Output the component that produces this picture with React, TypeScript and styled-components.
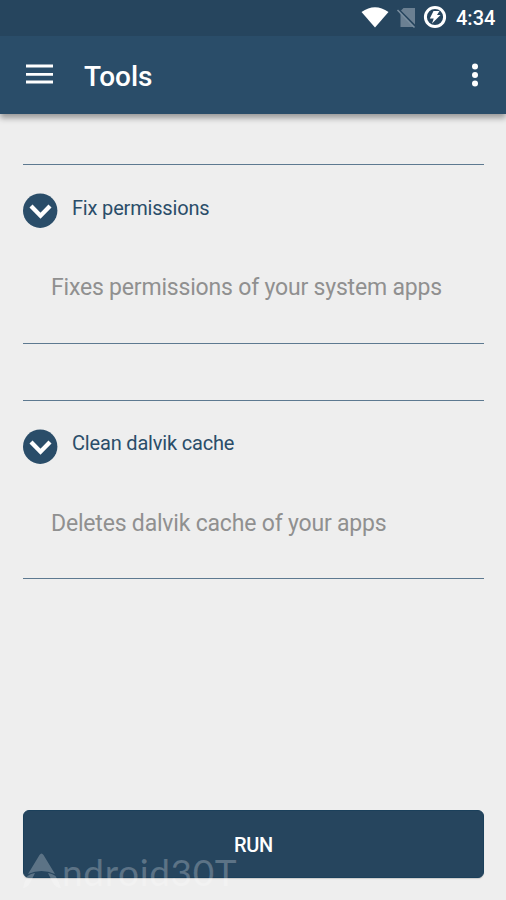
import React from 'react';
import styled, { createGlobalStyle } from 'styled-components';

const GlobalStyle = createGlobalStyle`
  * { box-sizing: border-box; }
  body { margin: 0; background: #eeeeee; font-family: Roboto, sans-serif; }
`;

const Screen = styled.div`
  width: 506px;
  height: 900px;
  display: flex;
  flex-direction: column;
  background: #eeeeee;
  overflow: hidden;
`;

const StatusBar = styled.div`
  height: 36px;
  flex: none;
  display: flex;
  align-items: center;
  justify-content: flex-end;
  padding-right: 11px;
  background: #26455e;
  color: #fff;
`;

const StatusIcons = styled.svg`
  width: 88px;
  height: 36px;
  margin-right: 7px;
`;

const Clock = styled.span`
  font-size: 20px;
  font-weight: 500;
  line-height: 36px;
  width: 39px;
  white-space: nowrap;
`;

const AppBar = styled.header`
  position: relative;
  height: 78px;
  flex: none;
  display: flex;
  align-items: center;
  padding: 0 27px 0 26px;
  background: #2a4d69;
  box-shadow: 0 4px 6px rgba(0, 0, 0, 0.36);
  clip-path: inset(0 0 -16px 0);
`;

const MenuIcon = styled.svg`
  width: 27px;
  height: 20px;
  margin-bottom: 2px;
`;

const Title = styled.h1`
  margin: 3px 0 0 31px;
  flex: 1;
  font-size: 28px;
  font-weight: 500;
  line-height: 36px;
  color: #fff;
`;

const MoreIcon = styled.svg`
  width: 8px;
  height: 24px;
`;

const Content = styled.main`
  flex: 1;
  display: flex;
  flex-direction: column;
  padding: 50px 22px 22px 23px;
`;

const Tool = styled.section<{ $height: number }>`
  height: ${(p) => p.$height}px;
  margin-bottom: 56px;
  padding-top: 28px;
  border-top: 1px solid #5d7990;
  border-bottom: 1px solid #5d7990;
`;

const ToolHeader = styled.div`
  display: flex;
  gap: 14px;
`;

const Chevron = styled.svg`
  width: 35px;
  height: 35px;
`;

const ToolName = styled.h2<{ $top: number }>`
  margin: ${(p) => p.$top}px 0 0;
  font-size: 20px;
  font-weight: 400;
  line-height: 24px;
  letter-spacing: -0.18px;
  color: #2a4d69;
`;

const Description = styled.p`
  margin: 46px 0 0 28px;
  font-size: 23px;
  line-height: 28px;
  letter-spacing: -0.19px;
  color: #909090;
  white-space: nowrap;
`;

const Footer = styled.div`
  position: relative;
  margin-top: auto;
`;

const RunButton = styled.button`
  display: block;
  width: 461px;
  height: 68px;
  padding: 2px 0 0;
  border: 1px solid #1b405b;
  border-radius: 6px;
  background: #26455e;
  color: #fff;
  font: 500 20px Roboto, sans-serif;
  letter-spacing: -0.3px;
  box-shadow: 0 1px 1px rgba(0, 0, 0, 0.15);
`;

const Watermark = styled.div`
  position: absolute;
  left: 0;
  top: 41px;
  display: flex;
  color: rgba(255, 255, 255, 0.25);
  pointer-events: none;
`;

const WatermarkLogo = styled.svg`
  width: 38px;
  height: 38px;
`;

const WatermarkText = styled.span`
  margin-left: 1px;
  font: 400 37px/42px Lato, sans-serif;
  letter-spacing: 0.65px;
`;

const tools = [
  { name: 'Fix permissions', text: 'Fixes permissions of your system apps', height: 180, nameTop: 3 },
  { name: 'Clean dalvik cache', text: 'Deletes dalvik cache of your apps', height: 179, nameTop: 2 },
];

export default function App() {
  return (
    <Screen>
      <GlobalStyle />
      <StatusBar>
        <StatusIcons viewBox="0 0 88 36">
          <path d="M.5 12Q14 2.500 27.500 12L14 27.500Z" fill="#fff" />
          <path d="M42.500 8H54v16.500L40 10.500ZM39.500 13 53 27H39.500Z" fill="#6b8092" />
          <path d="M36.500 10 53.500 27.500" stroke="#7b8fa0" strokeWidth="1.500" />
          <circle cx="74" cy="17" r="9.600" fill="none" stroke="#fff" strokeWidth="3" />
          <path d="M72.500 11h6l-2.500 4h3.500l-8.500 8.500 1.700-5h-3.900Z" fill="#fff" />
        </StatusIcons>
        <Clock>4:34</Clock>
      </StatusBar>
      <AppBar>
        <MenuIcon viewBox="0 0 27 20">
          <path d="M0 2h27M0 10.300h27M0 18h27" stroke="#fff" strokeWidth="2.800" />
        </MenuIcon>
        <Title>Tools</Title>
        <MoreIcon viewBox="0 0 8 24" fill="#fff">
          <circle cx="4" cy="3.500" r="3" />
          <circle cx="4" cy="12" r="3" />
          <circle cx="4" cy="20.500" r="3" />
        </MoreIcon>
      </AppBar>
      <Content>
        {tools.map((tool) => (
          <Tool key={tool.name} $height={tool.height}>
            <ToolHeader>
              <Chevron viewBox="0 0 35 35">
                <circle cx="17.200" cy="17.700" r="17.200" fill="#2a4d69" />
                <path d="M8 13 17.500 22.700 27 13" fill="none" stroke="#fff" strokeWidth="4.300" />
              </Chevron>
              <ToolName $top={tool.nameTop}>{tool.name}</ToolName>
            </ToolHeader>
            <Description>{tool.text}</Description>
          </Tool>
        ))}
        <Footer>
          <RunButton>RUN</RunButton>
          <Watermark>
            <WatermarkLogo viewBox="0 0 38 38" fill="currentColor">
              <path d="M16.500 4Q18.500 1 20.500 4L32 23Q18.500 17 5 23Z" />
              <path d="M4.500 25Q8 22.500 12 22L7 32Q4 37 0 37Q1 31 4.500 25ZM32.500 25Q29 22.500 25 22L30 32Q33 37 38 37Q36 31 32.500 25Z" />
            </WatermarkLogo>
            <WatermarkText>ndroid30T</WatermarkText>
          </Watermark>
        </Footer>
      </Content>
    </Screen>
  );
}
